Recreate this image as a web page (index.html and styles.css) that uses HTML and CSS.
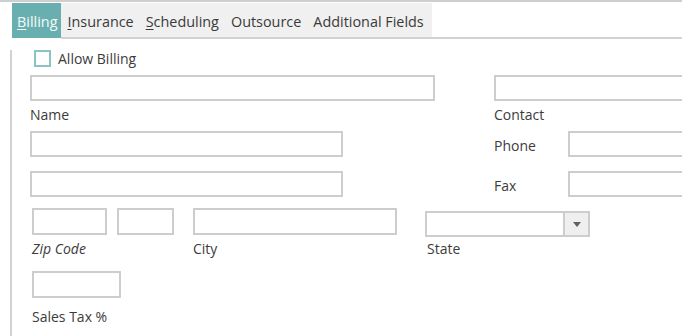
FILE: index.html
```html
<!DOCTYPE html>
<html lang="en">
<head>
  <meta charset="UTF-8" />
  <title>Billing</title>
  <link rel="stylesheet" href="styles.css">
</head>
<body>

  <div class="topline"></div>

  <div class="tabs">
    <div class="tab active"><u>B</u>illing</div>
    <div class="tab-rest">
      <div class="tab-strip">
        <div class="tab"><u>I</u>nsurance</div>
        <div class="tab"><u>S</u>cheduling</div>
        <div class="tab">Outsource</div>
        <div class="tab">Additional Fields</div>
      </div>
    </div>
  </div>

  <div class="panel">
    <div class="row check-row">
      <span class="checkbox"></span>
      <span class="check-label">Allow Billing</span>
    </div>

    <div class="row name-row">
      <div class="left">
        <input class="field w-name" type="text">
      </div>
      <div class="right">
        <input class="field w-contact" type="text">
      </div>
    </div>

    <div class="row label-row">
      <div class="left"><span>Name</span></div>
      <div class="right"><span>Contact</span></div>
    </div>

    <div class="row addr-row">
      <div class="left">
        <input class="field w-addr" type="text">
      </div>
      <div class="right">
        <span class="side-label">Phone</span>
        <input class="field w-phone" type="text">
      </div>
    </div>

    <div class="row addr-row second">
      <div class="left">
        <input class="field w-addr" type="text">
      </div>
      <div class="right">
        <span class="side-label">Fax</span>
        <input class="field w-phone" type="text">
      </div>
    </div>

    <div class="row zip-row">
      <input class="field w-zip" type="text">
      <input class="field w-zip4" type="text">
      <input class="field w-city" type="text">
      <div class="select">
        <span class="select-value"></span>
        <span class="select-btn"><span class="arrow"></span></span>
      </div>
    </div>

    <div class="row zip-labels">
      <span class="lbl-zip">Zip Code</span>
      <span class="lbl-city">City</span>
      <span class="lbl-state">State</span>
    </div>

    <div class="row tax-row">
      <input class="field w-tax" type="text">
    </div>

    <div class="row tax-label">
      <span>Sales Tax %</span>
    </div>
  </div>

</body>
</html>
```

FILE: styles.css
```css
body {
  margin: 0;
  font-family: 'Open Sans', 'Noto Sans', sans-serif;
  font-size: 14px;
  color: #3c3c3c;
  background-color: #fff;
  overflow: hidden;
}

.topline {
  height: 2px;
  background: #cfcfcf;
  margin-bottom: 1px;
}

.tabs {
  display: flex;
  height: 36px;
  padding-left: 12px;
}

.tab {
  box-sizing: border-box;
  height: 34px;
  padding: 3px 6px 0;
  line-height: 31px;
  font-size: 14.4px;
  white-space: nowrap;
  color: #3a3a3a;
}

.tab u {
  text-decoration-thickness: 1px;
  text-underline-offset: 2px;
}

.tab.active {
  background: #6aafb0;
  color: #f4fbfb;
  padding: 3px 4px 0 5px;
  height: 35px;
}

.tab-rest {
  flex: 1;
  border-bottom: 2px solid #d2d2d2;
  height: 34px;
}

.tab-strip {
  display: inline-flex;
  background: #f0f0f0;
  height: 34px;
  padding-right: 2px;
}

.panel {
  margin-left: 10px;
  border-left: 2px solid #d2d2d2;
  padding-left: 18px;
  min-height: calc(100vh - 39px);
  box-sizing: border-box;
}

.row {
  display: flex;
  align-items: flex-start;
}

.left {
  width: 464px;
  flex: none;
  display: flex;
}

.right {
  display: flex;
  align-items: center;
  white-space: nowrap;
}

.field {
  appearance: none;
  box-sizing: border-box;
  margin: 0;
  padding: 0;
  height: 26px;
  border: 2px solid #cdcdcd;
  background: #fff;
  flex: none;
}

.check-row {
  margin-top: 11px;
  align-items: center;
  height: 17px;
}

.checkbox {
  width: 17px;
  height: 17px;
  box-sizing: border-box;
  border: 2px solid #8cc4c5;
  margin-left: 4px;
  margin-right: 7px;
}

.name-row {
  margin-top: 8px;
}

.w-name {
  width: 405px;
}

.w-contact {
  width: 220px;
}

.label-row {
  margin-top: 4px;
  line-height: 20px;
}

.addr-row {
  margin-top: 6px;
}

.addr-row.second {
  margin-top: 14px;
}

.w-addr {
  width: 313px;
}

.side-label {
  width: 74px;
  padding-top: 3px;
}

.w-phone {
  width: 140px;
}

.zip-row {
  margin-top: 11px;
}

.zip-row .field {
  height: 27px;
}

.w-zip {
  width: 75px;
  margin-left: 2px;
}

.w-zip4 {
  width: 57px;
  margin-left: 10px;
}

.w-city {
  width: 204px;
  margin-left: 19px;
}

.select {
  display: flex;
  width: 165px;
  height: 26px;
  margin-left: 28px;
  margin-top: 3px;
  box-sizing: border-box;
  border: 2px solid #cdcdcd;
}

.select-value {
  flex: 1;
}

.select-btn {
  width: 23px;
  border-left: 2px solid #cdcdcd;
  background: #efefef;
  display: flex;
  align-items: center;
  justify-content: center;
}

.arrow {
  width: 0;
  height: 0;
  border-left: 4px solid transparent;
  border-right: 4px solid transparent;
  border-top: 5px solid #606060;
}

.zip-labels {
  margin-top: 2px;
  line-height: 20px;
}

.lbl-zip {
  font-style: italic;
  margin-left: 2px;
  width: 161px;
}

.lbl-city {
  width: 234px;
}

.tax-row {
  margin-top: 12px;
}

.w-tax {
  width: 89px;
  height: 27px;
  margin-left: 2px;
}

.tax-label {
  margin-top: 9px;
  line-height: 20px;
  padding-left: 2px;
}
```
